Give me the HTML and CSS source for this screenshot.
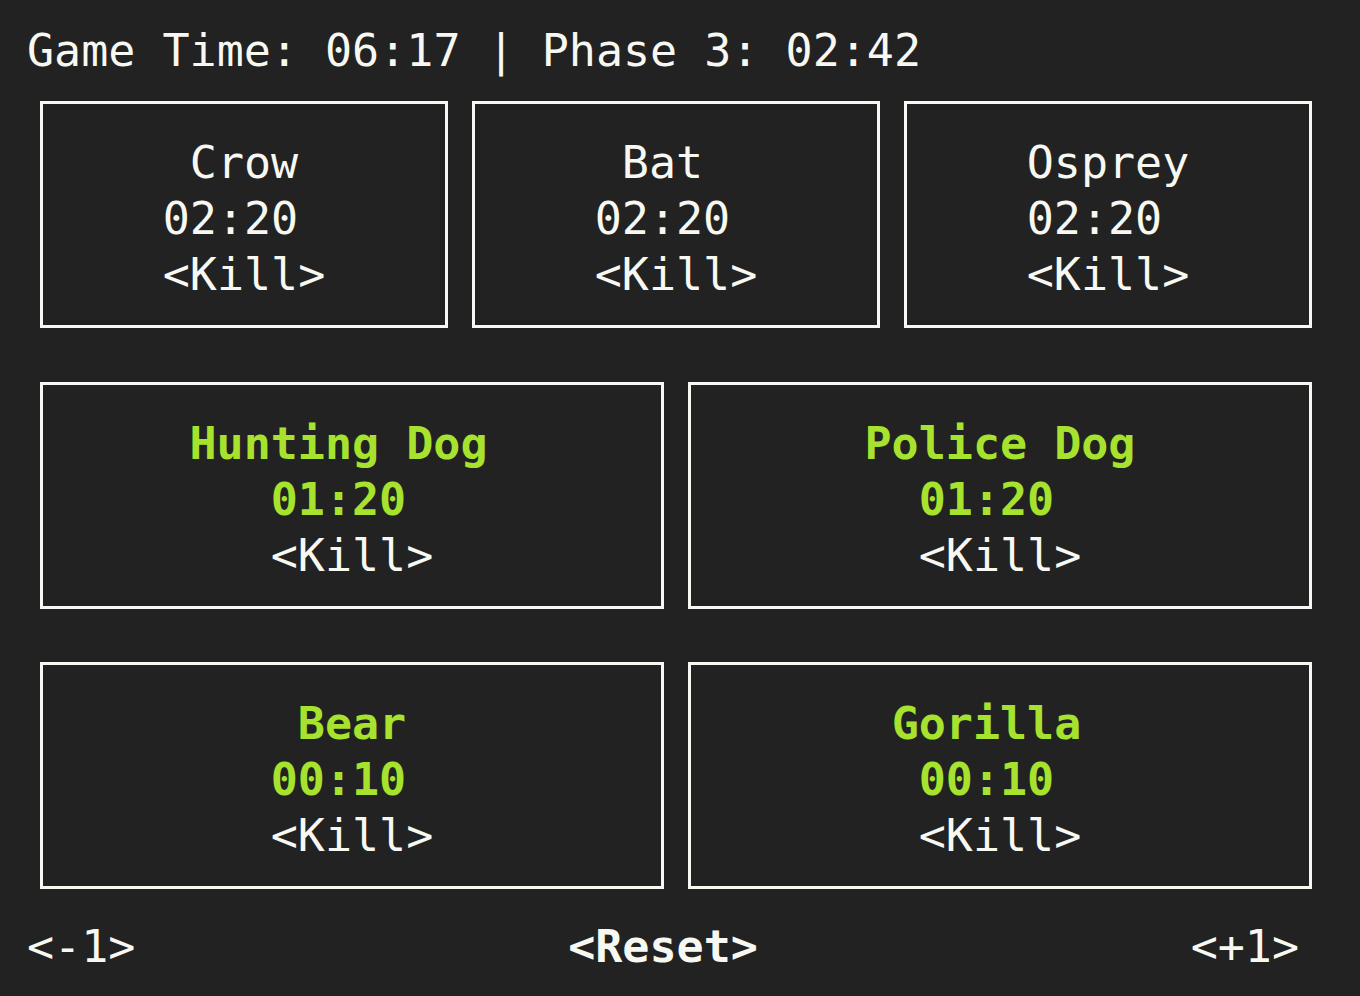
FILE: index.html
```html
<!DOCTYPE html>
<html>
<head>
    <meta charset="utf-8">
    <title>Phase Timers</title>
    <link rel="stylesheet" href="styles.css">
</head>
<body>
<div class="screen">
    <div class="title">Game Time: 06:17 | Phase 3: 02:42</div>

    <div class="board">
        <div class="row three">
            <div class="box">
                <div class="line">Crow</div>
                <div class="line odd">02:20</div>
                <div class="line">&lt;Kill&gt;</div>
            </div>
            <div class="box">
                <div class="line odd">Bat</div>
                <div class="line odd">02:20</div>
                <div class="line">&lt;Kill&gt;</div>
            </div>
            <div class="box">
                <div class="line">Osprey</div>
                <div class="line odd">02:20</div>
                <div class="line">&lt;Kill&gt;</div>
            </div>
        </div>

        <div class="row two">
            <div class="box">
                <div class="line odd ready">Hunting Dog</div>
                <div class="line odd ready">01:20</div>
                <div class="line">&lt;Kill&gt;</div>
            </div>
            <div class="box">
                <div class="line ready">Police Dog</div>
                <div class="line odd ready">01:20</div>
                <div class="line">&lt;Kill&gt;</div>
            </div>
        </div>

        <div class="row two">
            <div class="box">
                <div class="line ready">Bear</div>
                <div class="line odd ready">00:10</div>
                <div class="line">&lt;Kill&gt;</div>
            </div>
            <div class="box">
                <div class="line odd ready">Gorilla</div>
                <div class="line odd ready">00:10</div>
                <div class="line">&lt;Kill&gt;</div>
            </div>
        </div>
    </div>

    <div class="controls">
        <span class="btn">&lt;-1&gt;</span>
        <span class="btn reset">&lt;Reset&gt;</span>
        <span class="btn">&lt;+1&gt;</span>
    </div>
</div>
</body>
</html>
```

FILE: styles.css
```css
*{
    box-sizing: border-box;
}
body{
    margin: 0;
    background: #222222;
    color: #f8f8f2;
    font-family: "DejaVu Sans Mono", monospace;
    font-size: 45px;
    line-height: 56px;
}
.screen{
    padding: 23px 0 0 27px;
}
.title{
    white-space: pre;
    height: 56px;
}
.board{
    margin: 22px 0 0 13px;
    width: 1272px;
}
.row{
    display: grid;
    column-gap: 24px;
    margin-top: 53.5px;
}
.row:first-child{
    margin-top: 0;
}
.three{
    grid-template-columns: repeat(3, 1fr);
}
.two{
    grid-template-columns: repeat(2, 1fr);
}
.box{
    height: 227px;
    border: 3px solid #f8f8f2;
    padding-top: 31px;
    text-align: center;
}
.line{
    white-space: pre;
}
/* odd-length text sits half a cell left of centre, like the terminal grid */
.odd{
    padding-right: 1ch;
}
.ready{
    color: #a6e22e;
    font-weight: bold;
}
.controls{
    display: flex;
    justify-content: space-between;
    width: 1272px;
    margin-top: 30px;
}
.btn{
    white-space: pre;
}
.reset{
    font-weight: bold;
}
```
